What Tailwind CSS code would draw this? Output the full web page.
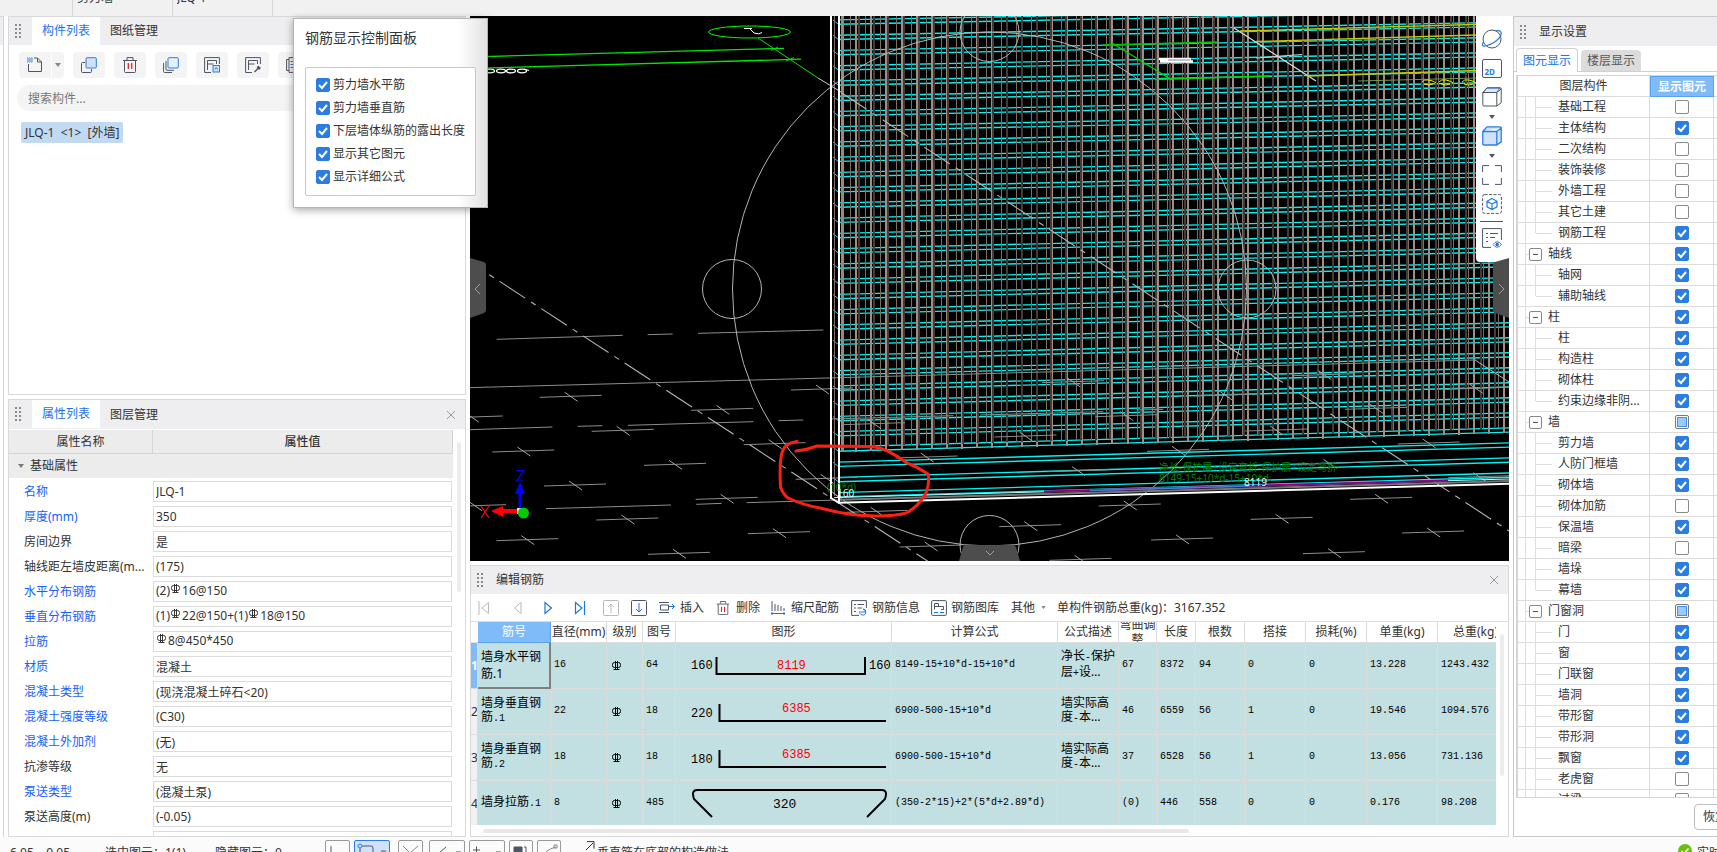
<!DOCTYPE html>
<html lang="zh-CN">
<head>
<meta charset="utf-8">
<title>钢筋三维</title>
<script src="https://cdn.jsdelivr.net/npm/@tailwindcss/browser@4"></script>
</head>
<body class="relative flex h-screen flex-col overflow-hidden bg-white font-['Noto_Sans','Noto_Sans_CJK_SC',sans-serif] text-[12px] leading-4 text-[#333]">

<svg class="hidden">
  <symbol id="grip" viewBox="0 0 6 14"><g fill="#8a8a8a"><path d="M0 0h2v2H0zM4 0h2v2H4zM0 4h2v2H0zM4 4h2v2H4zM0 8h2v2H0zM4 8h2v2H4zM0 12h2v2H0zM4 12h2v2H4z"/></g></symbol>
  <symbol id="close" viewBox="0 0 10 10"><path d="M1 1l8 8M9 1l-8 8" stroke="#9a9a9a" fill="none"/></symbol>
  <symbol id="caret" viewBox="0 0 6 4"><path d="M0 0h6L3 4z" fill="currentColor"/></symbol>
  <symbol id="tick" viewBox="0 0 14 14"><path d="M3 7l3 3 5-6" stroke="#fff" stroke-width="2" fill="none"/></symbol>
  <symbol id="steel" viewBox="0 0 10 10"><rect x=".5" y="1.500" width="8" height="5" rx="2" stroke="currentColor" fill="none"/><path d="M3.500 0v9M5.500 0v9M1.500 8.500h6" stroke="currentColor" fill="none"/></symbol>
  <symbol id="cube" viewBox="0 0 20 20"><path d="M.8 5.500h14V19H2Q.8 19 .8 17.800zM14.800 19l4.400-3.200V2L14.800 5.500M.8 5.500L5 .8h13q1.200 0 1.200 1.200"/></symbol>
</svg>

<header class="flex h-4 shrink-0 items-end bg-[#f1f1f1]">
  <label class="flex h-9 w-[73px] items-center justify-end border-r border-[#d5d5d5] pr-1.5 text-[#555]"><svg class="h-1 w-1.5"><use href="#caret"/></svg></label>
  <label class="flex h-9 w-[100px] items-center border-r border-[#d5d5d5] pr-1.5 pl-1 text-[#555]"><select aria-label="构件类型" class="flex-1 appearance-none text-[#333]"><option>剪力墙</option></select><svg class="h-1 w-1.5"><use href="#caret"/></svg></label>
  <label class="flex h-9 w-[100px] items-center border-r border-[#d5d5d5] pr-1.5 pl-1 text-[#555]"><select aria-label="构件" class="flex-1 appearance-none text-[#333]"><option>JLQ-1</option></select><svg class="h-1 w-1.5"><use href="#caret"/></svg></label>
</header>

<main class="flex min-h-0 flex-1">
  <aside class="mr-1 w-1 shrink-0 border-r border-[#d5d5d5]"><div class="h-[29px] border-t border-[#d9d9d9] bg-[#eeeef0]"></div></aside>

  <div class="flex w-[458px] shrink-0 flex-col gap-1">
    <section class="h-[379px] shrink-0 border border-[#d9d9d9]">
      <div class="flex h-7 items-stretch bg-[#eeeef0]">
        <svg class="mx-1.5 mt-[7px] h-3.5 w-1.5"><use href="#grip"/></svg>
        <button class="ml-[5px] w-[68px] bg-white text-[#1a73e8]">构件列表</button>
        <button class="w-[68px]">图纸管理</button>
      </div>
      <div class="flex h-[33px] items-center gap-[9px] overflow-hidden pt-[7px] pl-2.5 text-[#4d5566]">
        <div class="flex shrink-0 gap-px">
          <button aria-label="新建" class="grid h-[26px] w-8 place-items-center rounded-l-sm bg-[#f4f4f5]"><svg class="size-4" viewBox="0 0 16 16" fill="none" stroke="currentColor"><path d="M1.500 7v7.500h13V5l-4-4H7M10.500 1v4h4"/><path d="M0 1h5M0 3h5M0 5h5" stroke="#2b7de1" stroke-dasharray="1 1"/><path d="M1 2h5M1 4h5" stroke="#2b7de1" stroke-dasharray="1 1"/></svg></button>
          <button aria-label="新建选项" class="grid h-[26px] w-3 place-items-center rounded-r-sm bg-[#f4f4f5] text-[#888]"><svg class="h-1 w-1.5"><use href="#caret"/></svg></button>
        </div>
        <button aria-label="复制" class="grid h-[26px] w-8 shrink-0 place-items-center rounded-sm bg-[#f4f4f5]"><svg class="size-4" viewBox="0 0 16 16" fill="none" stroke="currentColor"><path d="M4 5.500H1.500q-1 0-1 1v8q0 1 1 1h8q1 0 1-1V12"/><rect x="5" y=".7" width="10.300" height="10.300" rx="1" fill="#cfe2fa" stroke="#2b7de1"/></svg></button>
        <button aria-label="删除" class="grid h-[26px] w-8 shrink-0 place-items-center rounded-sm bg-[#f4f4f5]"><svg class="size-4" viewBox="0 0 16 16" fill="none" stroke="currentColor"><path d="M1 3.500h14M5 3V.6h6V3M2.500 3.500v11q0 1 1 1h9q1 0 1-1v-11"/><path d="M6.300 6v6M9.700 6v6" stroke="#e0262b" stroke-width="1.300"/></svg></button>
        <button aria-label="层间复制" class="grid h-[26px] w-8 shrink-0 place-items-center rounded-sm bg-[#f4f4f5]"><svg class="size-4" viewBox="0 0 16 16" fill="none" stroke="currentColor"><path d="M.6 6v8.500q0 1 1 1H9M3 4v8q0 1.300 1 1.300h7"/><rect x="5" y=".7" width="10.300" height="10.300" rx="1" fill="#e6f0fd" stroke="#2b7de1"/></svg></button>
        <button aria-label="存档" class="grid h-[26px] w-8 shrink-0 place-items-center rounded-sm bg-[#f4f4f5]"><svg class="size-4" viewBox="0 0 16 16" fill="none" stroke="currentColor"><path d="M7 15.500H.6V.6h14.800V7M3.500 13V3.500h9V7M3.500 7h6"/><rect x="9" y="8.500" width="6.500" height="6.500" fill="#cfe2fa" stroke="#2b7de1"/><path d="M11 12.500l1.200-2 1.300 2" stroke="#2b7de1"/></svg></button>
        <button aria-label="提取" class="grid h-[26px] w-8 shrink-0 place-items-center rounded-sm bg-[#f4f4f5]"><svg class="size-4" viewBox="0 0 16 16" fill="none" stroke="currentColor"><path d="M7 15.500H.6V.6h14.800V7M3.500 13V3.500h9V7M3.500 7h6"/><path d="M9.500 15l4-4" stroke-width="1.500"/><path d="M12.500 9.500l2.500 2.500" stroke-width="2.500"/></svg></button>
        <button aria-label="更多" class="grid h-[26px] w-8 shrink-0 place-items-center rounded-sm bg-[#f4f4f5]"><svg class="size-4" viewBox="0 0 16 16" fill="none" stroke="currentColor"><path d="M3 2.500H.6v11H3M3 .6h12v14.800H3z"/><path d="M4.500 4.500h9M4.500 7.500h9M4.500 10.500h9" stroke="#2b7de1"/></svg></button>
      </div>
      <div class="mx-2 mt-[7px]"><input type="text" aria-label="搜索构件" placeholder="搜索构件..." class="h-[26px] w-full rounded-full bg-[#f4f4f5] px-[11px] placeholder:text-[#777]"></div>
      <button class="mt-[11px] ml-3 h-[21px] rounded-xs bg-[#c2d9f2] px-1 whitespace-pre">JLQ-1  &lt;1&gt;  [外墙]</button>
    </section>

    <section class="flex min-h-0 flex-1 flex-col border border-[#d9d9d9]">
      <div class="flex h-[29px] shrink-0 items-stretch bg-[#eeeef0]">
        <svg class="mx-1.5 mt-[7px] h-3.5 w-1.5"><use href="#grip"/></svg>
        <button class="mb-px ml-[5px] w-[68px] bg-white text-[#1a73e8]">属性列表</button>
        <button class="w-[68px]">图层管理</button>
        <button aria-label="关闭" class="mr-[9px] ml-auto"><svg class="size-2.5"><use href="#close"/></svg></button>
      </div>
      <div class="flex min-h-0 flex-1 overflow-hidden pt-px">
        <div class="flex-1">
          <div class="grid h-6 grid-cols-[144px_1fr] border-b border-[#d5d5d5] bg-[#ececed] text-center leading-6">
            <div class="border-r border-[#d5d5d5]">属性名称</div><div class="border-r border-[#d5d5d5] font-medium">属性值</div>
          </div>
          <div class="mb-px flex h-6 items-center bg-[#ececed] pl-[9px] text-[#777]"><svg class="h-1 w-1.5"><use href="#caret"/></svg><span class="ml-1.5 text-[#333]">基础属性</span></div>
          <div id="props"></div>
        </div>
        <div class="w-3 pt-3 pl-1"><div class="h-[150px] w-1 rounded-full bg-[#ececec]"></div></div>
      </div>
    </section>
  </div>

  <div class="mx-1 flex min-w-0 flex-1 flex-col gap-1">
    <section class="relative min-h-0 flex-1 overflow-hidden bg-black">
      <svg id="scene" class="block size-full" viewBox="470 16 1039 545" preserveAspectRatio="xMinYMin slice" fill="none"></svg>
      <div class="absolute top-0 right-0 flex w-[33px] flex-col items-center rounded-bl bg-white pt-[13px] pr-0.5 pb-3.5 text-[#4d5566]">
        <button aria-label="动态观察"><svg class="size-5" viewBox="0 0 20 20" fill="none" stroke="currentColor"><circle cx="10" cy="10" r="9"/><path d="M2 12.500C-1 16 0 18 5 16.500S17 11 18.500 7 19 .8 13.500 2" stroke="#2b7de1" stroke-width="1.300"/></svg></button>
        <button aria-label="二维" class="mt-2.5 flex h-[19px] w-5 items-end rounded-xs border border-[#4d5566] pl-0.5 text-[8px] leading-[11px] font-bold text-[#2b7de1]">2D</button>
        <button aria-label="线框" class="mt-[9px]"><svg class="size-5" fill="none" stroke="#4d5566"><path d="M1 5.500L5 1h13l-3.500 4.500z" fill="#dbe9fc" stroke="#2b7de1"/><use href="#cube"/></svg></button>
        <svg class="mt-2 h-1 w-1.5"><use href="#caret"/></svg>
        <button aria-label="实体" class="mt-[7px]"><svg class="size-5" fill="#cfe2fa" stroke="#2b7de1" stroke-width="1.300"><use href="#cube"/></svg></button>
        <svg class="mt-2 h-1 w-1.5"><use href="#caret"/></svg>
        <button aria-label="全屏" class="mt-[7px]"><svg class="size-5" viewBox="0 0 20 20" fill="none" stroke="currentColor"><path d="M.6 7V.6H7M13 .6h6.400V7M19.400 13v6.400H13M7 19.400H.6V13"/></svg></button>
        <button aria-label="局部三维" class="mt-[9px]"><svg class="size-5" viewBox="0 0 20 20" fill="none" stroke="currentColor"><rect x=".6" y=".6" width="18.800" height="18.800" rx="2" stroke-dasharray="3 1.500"/><path d="M10 4.500l5 2.800v5.500l-5 2.800-5-2.800V7.300zM5 7.300l5 2.800 5-2.800M10 10v5.600" stroke="#2b7de1" stroke-width="1.200"/></svg></button>
        <div class="mt-[7px] h-px w-[23px] bg-[#4d5566]"></div>
        <button aria-label="显示设置" class="mt-1.5"><svg class="size-5" viewBox="0 0 20 20" fill="none" stroke="currentColor"><path d="M19.400 12V.6H.6v18.800H9M4 5.500h2M8 5.500h8M4 9.500h2M8 9.500h5M4 13.500h2"/><path d="M11 16.500q4-5.500 8.500 0-4.500 5.500-8.500 0z" stroke="#2b7de1"/><circle cx="15.200" cy="16.500" r="1.300" fill="#2b7de1"/></svg></button>
      </div>
      <button aria-label="收起左侧" class="absolute top-[242px] left-0"><svg class="h-[62px] w-4" viewBox="0 0 16 62"><path d="M0 0l14 4q2 .5 2 3v45q0 2-2 3L0 60z" fill="#4d4d4d"/><path d="M10 26l-5 5 5 5" fill="none" stroke="#a0a0a0"/></svg></button>
      <button aria-label="收起右侧" class="absolute top-[242px] right-0"><svg class="h-[62px] w-4" viewBox="0 0 16 62"><path d="M16 0L2 4Q0 4.500 0 7v45q0 2 2 3l14 5z" fill="#4d4d4d"/><path d="M6 26l5 5-5 5" fill="none" stroke="#a0a0a0"/></svg></button>
      <button aria-label="收起下方" class="absolute bottom-0 left-[489px]"><svg class="block h-4 w-[62px]" viewBox="0 0 62 16"><path d="M0 16L4 2q.5-2 3-2h46q3 0 4 2l4 14z" fill="#4d4d4d"/><path d="M27 6l4 4 4-4" fill="none" stroke="#a0a0a0"/></svg></button>
    </section>

    <section class="h-[272px] shrink-0 border border-[#d9d9d9]">
      <div class="flex h-7 items-center bg-[#eeeef0]">
        <svg class="mx-1.5 h-3.5 w-1.5"><use href="#grip"/></svg>
        <h2 class="ml-[7px]">编辑钢筋</h2>
        <button aria-label="关闭" class="mr-[9px] ml-auto"><svg class="size-2.5"><use href="#close"/></svg></button>
      </div>
      <div class="flex h-[27px] items-center overflow-hidden whitespace-nowrap">
        <button aria-label="首行" class="ml-[7px] w-[34px]"><svg class="h-3.5 w-3" viewBox="0 0 12 14" fill="none" stroke="#b9b9b9"><path d="M1 0v14M10.500 1.500v11L4 7z"/></svg></button>
        <button aria-label="上一行" class="w-[31px]"><svg class="h-3.5 w-3" viewBox="0 0 12 14" fill="none" stroke="#b9b9b9"><path d="M9 1.500v11L2.500 7z"/></svg></button>
        <button aria-label="下一行" class="w-[31px]"><svg class="h-3.5 w-3" viewBox="0 0 12 14" fill="none" stroke="#1a73e8" stroke-width="1.200"><path d="M2 1.500v11L8.500 7z"/></svg></button>
        <button aria-label="末行" class="w-[29px]"><svg class="h-3.5 w-3" viewBox="0 0 12 14" fill="none" stroke="#1a73e8" stroke-width="1.200"><path d="M1.500 1.500v11L8 7zM10.500 0v14"/></svg></button>
        <button aria-label="上移" class="w-7"><svg class="size-4" viewBox="0 0 16 16" fill="none" stroke="#b9b9b9"><rect x=".5" y=".5" width="15" height="15" rx="1"/><path d="M8 13V4M5 7l3-3 3 3"/></svg></button>
        <button aria-label="下移" class="w-7"><svg class="size-4" viewBox="0 0 16 16" fill="none" stroke="#4d5566"><rect x=".5" y=".5" width="15" height="15" rx="1"/><path d="M8 3v9M5 9l3 3 3-3" stroke="#1a73e8"/></svg></button>
        <button class="flex w-[57px] items-center gap-[5px]"><svg class="size-4" viewBox="0 0 16 16" fill="none" stroke="#4d5566"><path d="M0 2.500h10M1.500 5h8v5h-8zM0 12.500h10"/><path d="M10 6.500h5M13 4l2.500 2.500L13 9" stroke="#1a73e8"/></svg>插入</button>
        <button class="flex w-[55px] items-center gap-1.5"><svg class="size-3.5" viewBox="0 0 14 16" fill="none" stroke="#4d5566"><path d="M0 3.500h14M4 3V.6h6V3M1.500 3.500v11q0 1 1 1h9q1 0 1-1v-11"/><path d="M5.300 6.500v6M8.700 6.500v6" stroke="#e0262b" stroke-width="1.300"/></svg>删除</button>
        <button class="flex w-20 items-center gap-1.5"><svg class="size-3.5" viewBox="0 0 14 14" fill="none" stroke="#4d5566"><path d="M1 0v10M4 3v7M7 4v6M10 5v5M13 7v3"/><path d="M0 12.500h14M1 11v3M13 11v3" stroke="#1a73e8"/></svg>缩尺配筋</button>
        <button class="flex w-20 items-center gap-[5px]"><svg class="size-4" viewBox="0 0 16 16" fill="none" stroke="#4d5566"><path d="M15.400 8V.6H.6v14.800H8M3 4.500h2M6.500 4.500H13M3 8h2M6.500 8H11M3 11.500h2"/><path d="M9 11a3 3 0 1 0 3-2M12 9l2 1.500M10 12h5" stroke="#1a73e8"/></svg>钢筋信息</button>
        <button class="flex w-[79px] items-center gap-1"><svg class="size-4" viewBox="0 0 16 16" fill="none" stroke="#4d5566"><rect x=".6" y=".6" width="14.800" height="14.800" rx="1"/><path d="M3.500 9.500V3.500h4V7M3.500 6.500h9v3H10"/><path d="M3 12.500h10" stroke="#1a73e8" stroke-dasharray="4 2"/></svg>钢筋图库</button>
        <button class="flex w-[47px] items-center gap-1.5 pl-px text-[#888]"><span class="text-[#333]">其他</span><svg class="h-[3px] w-[5px]" viewBox="0 0 6 4"><use href="#caret"/></svg></button>
        <span>单构件钢筋总重(kg)：3167.352</span>
      </div>
      <div class="flex border-t border-[#dcdcdc]">
        <div class="h-[203px] flex-1 overflow-hidden">
          <table class="w-[1038px] table-fixed border-separate border-spacing-0">
            <colgroup><col class="w-[7px]"><col class="w-[73px]"><col class="w-14"><col class="w-9"><col class="w-[33px]"><col class="w-[216px]"><col class="w-[166px]"><col class="w-[61px]"><col class="w-[38px]"><col class="w-[39px]"><col class="w-[49px]"><col class="w-[61px]"><col class="w-[61px]"><col class="w-[71px]"><col class="w-[76px]"></colgroup>
            <thead id="barHead"></thead>
            <tbody id="barBody" class="bg-[#c2dfe1] text-black"></tbody>
          </table>
        </div>
        <div class="w-3 pt-3 pl-1"><div class="h-[142px] w-1 rounded-full bg-[#ececec]"></div></div>
      </div>
      <div class="mt-1 ml-3 h-1 w-[706px] rounded-full bg-[#e8e8e8]"></div>
    </section>
  </div>

  <aside class="flex w-[204px] shrink-0 flex-col overflow-hidden border border-r-0 border-[#c9c9cd]">
    <div class="flex h-[29px] shrink-0 items-center bg-[#eeeef0]">
      <svg class="mx-1.5 h-3.5 w-1.5"><use href="#grip"/></svg>
      <h2 class="ml-[7px]">显示设置</h2>
    </div>
    <div class="flex h-[26px] shrink-0 items-end pt-[2px]">
      <span class="w-0.5 self-stretch border-b border-[#d0d0d0]"></span>
      <button class="h-6 w-[62px] rounded-t-sm border border-b-0 border-[#d0d0d0] text-[#1a73e8]">图元显示</button>
      <div class="flex-1 self-stretch border-b border-[#d0d0d0] pt-0.5 pl-[3px]"><button class="h-[21px] w-[60px] rounded-t-sm bg-[#dcdcdc] text-[#555]">楼层显示</button></div>
    </div>
    <div class="mt-[3px] ml-0.5 min-h-0 flex-1 overflow-hidden border-t border-b border-l-2 border-[#d5d5d5]">
      <table class="w-full table-fixed border-separate border-spacing-0">
        <colgroup><col class="w-[132px]"><col class="w-[64px]"><col></colgroup>
        <thead><tr class="h-[21px]"><th class="border-r border-b border-[#dcdcdc] font-normal">图层构件</th><th class="border border-[#5aa2ee] bg-[#7fbaf9] font-bold text-white">显示图元</th><th class="border-b border-[#dcdcdc]"></th></tr></thead>
        <tbody id="tree"></tbody>
      </table>
    </div>
    <div class="flex h-[38px] shrink-0 items-center pl-[180px]"><button class="h-[26px] shrink-0 rounded-sm border border-[#bdbdbd] px-2 whitespace-nowrap">恢复默认</button></div>
  </aside>
</main>

<footer class="flex h-[15px] shrink-0 items-start overflow-hidden bg-[#fbfbfb] whitespace-nowrap">
  <span class="w-[95px] pl-2.5 leading-8 whitespace-pre">6.05    0.05</span>
  <span class="w-[110px] pl-2.5 leading-8">选中图元：1(1)</span>
  <span class="w-[120px] pl-2.5 leading-8">隐藏图元：0</span>
  <div class="flex gap-1 pt-[3px] text-[#4d5566]">
    <button aria-label="正交" class="h-6 w-[25px] rounded-xs border border-[#999]"><svg class="size-5" fill="none" stroke="currentColor"><path d="M5 4v12h12"/></svg></button>
    <button aria-label="捕捉" class="flex h-6 w-9 items-center rounded-xs border border-[#2b7de1] bg-[#cfe2fa]"><svg class="h-6 w-8" fill="none" stroke="currentColor"><path d="M7 6h9q2 0 2 2v12M5 8v12"/><circle cx="5" cy="6" r="2" stroke="#2b7de1"/><path d="M26 11h5"/></svg></button>
    <button aria-label="交点" class="ml-1 h-6 w-[25px] rounded-xs border border-[#999]"><svg class="size-5" fill="none" stroke="#888"><path d="M4 4l7 7 8-7M11 11v8"/></svg></button>
    <button aria-label="垂点" class="ml-0.5 h-6 w-9 rounded-xs border border-[#999]"><svg class="h-6 w-8" fill="none" stroke="currentColor"><path d="M9 12l7-6M26 11h5"/></svg></button>
    <button aria-label="中点" class="h-6 w-9 rounded-xs border border-[#999]"><svg class="h-6 w-8" fill="none" stroke="currentColor"><path d="M3 9h7M6.500 5.500v8M26 11h5"/></svg></button>
    <button aria-label="顶点" class="h-6 w-6 rounded-xs border border-[#999]"><svg class="size-5" fill="none" stroke="currentColor"><path d="M4 5h8v10H4z" fill="currentColor"/><path d="M14 5h2v10"/></svg></button>
    <button aria-label="弧线" class="h-6 w-6 rounded-xs border border-[#999]"><svg class="size-5" fill="none" stroke="#888"><path d="M5 16Q6 8 18 5"/><path d="M16 3h3v3h-3z"/></svg></button>
  </div>
  <svg class="mt-1 ml-6 size-2.5" viewBox="0 0 10 10" fill="none" stroke="#333"><path d="M1 9l7-7M2 .6h7v7"/></svg>
  <span class="ml-0.5 leading-8">垂直筋在底部的构造做法</span>
  <svg class="mt-1.5 ml-auto size-4" viewBox="0 0 16 16"><circle cx="8" cy="8" r="7" fill="#6cbf12"/><path d="M4.500 8l2.500 2.500 4.500-5" stroke="#fff" stroke-width="1.500" fill="none"/></svg>
  <span class="ml-1 w-5 overflow-hidden leading-8">实时</span>
</footer>

<div role="dialog" aria-label="钢筋显示控制面板" class="absolute top-[18px] left-[293px] h-[190px] w-[195px] border border-[#b5b5b5] bg-linear-to-r from-white from-85% to-[#e2e2e2] px-[11px] pt-2.5 shadow-[0_2px_8px_rgba(0,0,0,0.35)]">
  <h2 class="text-[14px] leading-[18px]">钢筋显示控制面板</h2>
  <div id="options" class="mt-5 h-[129px] rounded-xs border border-[#c8c8c8] bg-white pt-[5px] pl-2.5"></div>
</div>

<script>
const put = (id, html) => { document.getElementById(id).innerHTML = html; };

/* state: 1 ticked, 0 empty, 2 partly ticked */
const box = (state, name) => {
  if (state === 2) return `<span class="inline-grid size-3.5 rounded-xs border border-[#777] p-px"><input type="checkbox" aria-label="${name}" class="size-full appearance-none border border-[#3b93f5] bg-[#9ccafb]"></span>`;
  return `<span class="inline-grid size-3.5"><input type="checkbox" aria-label="${name}" ${state ? 'checked' : ''} class="col-start-1 row-start-1 size-3.5 appearance-none rounded-xs border border-[#8a8a8a] bg-white checked:border-[#2b7de1] checked:bg-[#2b7de1]">${state ? '<svg class="pointer-events-none col-start-1 row-start-1 size-3.5"><use href="#tick"/></svg>' : ''}</span>`;
};

put('options', ['剪力墙水平筋', '剪力墙垂直筋', '下层墙体纵筋的露出长度', '显示其它图元', '显示详细公式']
  .map(t => `<label class="flex h-[23px] items-center gap-[3px] whitespace-nowrap">${box(1, t)}<span>${t}</span></label>`).join(''));

const steel = '<svg class="mx-px inline-block size-2.5 align-[1px]"><use href="#steel"/></svg>';
put('props', [
  ['名称', 'JLQ-1', 1], ['厚度(mm)', '350', 1], ['房间边界', '是', 0], ['轴线距左墙皮距离(m...', '(175)', 0],
  ['水平分布钢筋', '(2)#16@150', 1], ['垂直分布钢筋', '(1)#22@150+(1)#18@150', 1], ['拉筋', '#8@450*450', 1],
  ['材质', '混凝土', 1], ['混凝土类型', '(现浇混凝土碎石<20)', 1], ['混凝土强度等级', '(C30)', 1], ['混凝土外加剂', '(无)', 1],
  ['抗渗等级', '无', 0], ['泵送类型', '(混凝土泵)', 1], ['泵送高度(m)', '(-0.05)', 0], ['', '', 0]
].map(([k, v, blue], i) => `<div class="grid h-[25px] grid-cols-[144px_1fr] items-center"><label for="p${i}" class="pl-[15px] whitespace-nowrap ${blue ? 'text-[#1560ff]' : 'text-[#333]'}">${k}</label>${
  v.includes('#')
    ? `<div id="p${i}" role="textbox" aria-label="${k}" contenteditable="true" class="mr-px h-[21px] border border-[#dcdcdc] px-0.5 leading-[18px]">${v.replaceAll('#', steel)}</div>`
    : `<input id="p${i}" type="text" value="${v.replace('<', '&lt;')}" class="mr-px h-[21px] border border-[#dcdcdc] px-0.5">`}</div>`).join(''));

const heads = ['筋号', '直径(mm)', '级别', '图号', '图形', '计算公式', '公式描述', '弯曲调整', '长度', '根数', '搭接', '损耗(%)', '单重(kg)', '总重(kg)'];
put('barHead', '<tr><th class="border-b border-[#dcdcdc]"></th>' + heads.map((h, i) =>
  `<th class="border-r border-b p-0 font-normal ${i === 0 ? 'border-[#5aa2ee] bg-[#7fbaf9] text-white' : 'border-[#dcdcdc]'}"><div class="flex h-5 items-center justify-center overflow-hidden ${i === 7 ? 'leading-[15px]' : 'whitespace-nowrap'}">${h}</div></th>`).join('') + '</tr>');

const shape = {
  a: `<path d="M40.500 14v17H189V14"/><g class="font-['Liberation_Mono',monospace] text-[12px]" stroke="none" fill="#000"><text x="15" y="26">160</text><text x="193" y="26">160</text><text x="101" y="26" fill="#f00">8119</text></g>`,
  b: n => `<path d="M43.500 15v17H210"/><g class="font-['Liberation_Mono',monospace] text-[12px]" stroke="none" fill="#000"><text x="15" y="28">${n}</text><text x="106" y="23" fill="#f00">6385</text></g>`,
  c: `<path d="M36 36L18 18q-3-9 3-9H206q6 0 3 9L191 36"/><g class="font-['Liberation_Mono',monospace] text-[13px]" stroke="none" fill="#000"><text x="97" y="27">320</text></g>`
};
const L = t => `<span class="font-['Liberation_Mono',monospace] text-[10px]">${t}</span>`;
const bars = [
  ['墙身水平钢<br>筋.1', '16', '64', shape.a, '8149-15+10*d-15+10*d', `净长${L('-')}保护<br>层${L('+')}设…`, '67', '8372', '94', '0', '0', '13.228', '1243.432'],
  [`墙身垂直钢<br>筋${L('.1')}`, '22', '18', shape.b(220), '6900-500-15+10*d', `墙实际高<br>度${L('-')}本…`, '46', '6559', '56', '1', '0', '19.546', '1094.576'],
  [`墙身垂直钢<br>筋${L('.2')}`, '18', '18', shape.b(180), '6900-500-15+10*d', `墙实际高<br>度${L('-')}本…`, '37', '6528', '56', '1', '0', '13.056', '731.136'],
  [`墙身拉筋${L('.1')}`, '8', '485', shape.c, '(350-2*15)+2*(5*d+2.89*d)', '', '(0)', '446', '558', '0', '0', '0.176', '98.208']
];
put('barBody', bars.map((b, i) => {
  const n = t => `<td class="border-r border-b border-[#dcdcdc] p-0 pb-0.5 pl-[3px] font-['Liberation_Mono',monospace] text-[10px] whitespace-nowrap">${t}</td>`;
  return `<tr class="h-[46px]"><th class="overflow-hidden border-r border-b border-[#dcdcdc] p-0 ${i === 0 ? 'bg-[#7fbaf9] font-bold text-white' : 'bg-[#f1f1f1] font-normal text-[#333]'}">${i + 1}</th>
  <td class="p-0 pl-[3px] whitespace-nowrap ${i === 0 ? 'border-r-2 border-b-2 border-[#808080] leading-[17px]' : 'border-r border-b border-[#dcdcdc] pb-0.5 leading-[14px]'}">${b[0]}</td>${n(b[1])}
  <td class="border-r border-b border-[#dcdcdc] p-0 pl-[5px]"><svg class="size-2.5"><use href="#steel"/></svg></td>${n(b[2])}
  <td class="border-r border-b border-[#dcdcdc] p-0"><svg class="block h-[45px] w-full overflow-visible" fill="none" stroke="#000" stroke-width="2">${b[3]}</svg></td>${n(b[4])}
  <td class="border-r border-b border-[#dcdcdc] p-0 pb-0.5 pl-[3px] leading-[14px] whitespace-nowrap">${b[5]}</td>${b.slice(6).map(n).join('')}</tr>`;
}).join(''));

/* name, state, level: p group row, c child, l last child */
put('tree', `基础工程 0 c,主体结构 1 c,二次结构 0 c,装饰装修 0 c,外墙工程 0 c,其它土建 0 c,钢筋工程 1 l,轴线 1 p,轴网 1 c,辅助轴线 1 l,柱 1 p,柱 1 c,构造柱 1 c,砌体柱 1 c,约束边缘非阴... 1 l,墙 2 p,剪力墙 1 c,人防门框墙 1 c,砌体墙 1 c,砌体加筋 0 c,保温墙 1 c,暗梁 0 c,墙垛 1 c,幕墙 1 l,门窗洞 2 p,门 1 c,窗 1 c,门联窗 1 c,墙洞 1 c,带形窗 1 c,带形洞 1 c,飘窗 1 c,老虎窗 0 c,过梁 0 c`
  .split(',').map(r => {
    const [name, s, lv] = r.split(' ');
    const lead = lv === 'p'
      ? '<span class="h-px w-[3px] bg-[#dedede]"></span><button aria-label="折叠" class="mr-1.5 grid size-[13px] place-items-center rounded-xs border border-[#888]"><span class="h-px w-[5px] bg-[#555]"></span></button>'
      : `<span class="ml-[9px] w-px self-start bg-[#dedede] ${lv === 'l' ? 'h-2.5' : 'h-5'}"></span><span class="mr-1.5 h-px w-4 bg-[#dedede]"></span>`;
    return `<tr class="h-[21px]"><td class="border-r border-b border-[#dcdcdc] p-0"><div class="flex h-5 items-center whitespace-nowrap"><span class="w-2 self-stretch border-r border-[#dedede]"></span>${lead}<span>${name}</span></div></td><td class="border-r border-b border-[#dcdcdc] p-0"><div class="flex h-5 items-center justify-center">${box(+s, name)}</div></td><td class="border-b border-[#dcdcdc] p-0"></td></tr>`;
  }).join(''));

/* 3D view */
const out = [];
const line = (x1, y1, x2, y2, c, w = 1, extra = '') => out.push(`<path d="M${x1} ${y1}L${x2} ${y2}" stroke="${c}" stroke-width="${w}" ${extra}/>`);
const crisp = 'shape-rendering="crispEdges"';
const ends = x => 452 - (x - 841) * 0.028;

for (let k = 0; k <= 31; k++) {
  for (const d of [-4.3, 0]) {
    const y = 24.2 + 15.25 * k + d;
    const s = 0.019 + (y - 16) / 484 * 0.0105;
    line(838, y.toFixed(1), 1509, (y - 671 * s).toFixed(1), '#00f4f4', 1.4);
  }
  const y = 20 + 15.25 * k;
  line(833, y, 838, y + 4, '#00dcdc');
}
line(842, 16, 842, 452, '#9a8880', 3, crisp);
for (let k = 0; k < 45; k++) {
  const x = Math.round(856.3 + 15.07 * k), d = k / 44;
  if (x < 1508) line(x, 16, x, ends(x), '#a08e86', 2, crisp);
  line(x - 5.5, 16, x - 5.5, ends(x) - 5, '#7d6e68', 1, crisp);
  const t = x + 3 - Math.round(12 * d);
  line(t, 16, t, ends(x) - 5, '#453c39', 2, crisp);
}
line(834.5, 16, 834.5, 496, '#7d6e68', 1, crisp);

/* floor grid crosses */
const cross = (x, y) => { line(x - 31, y + 1, x + 31, y - 1, '#8c8c8c'); line(x - 6, y - 4, x + 7, y + 5, '#a8a8a8'); };
[[302,349],[757,388],[458,451],[160,513],[615,553],[315,615],[770,655],[472,717],[172,779],[627,820],[927,758],[1056,327],[914,491],[1070,595],[1212,431],[1370,531],[1220,694],[1382,798],[5,411],[15,677]].forEach(([x, y]) => cross(470 + x / 3, 280 + y / 3));
[[270,305],[425,407],[712,345],[132,468],[1000,284],[860,450],[1150,385],[1440,325],[575,511],[1303,489],[285,572],[1015,550],[435,675],[1165,655],[146,737],[876,715],[587,777],[1316,756],[1028,818],[292,838],[1450,590]].forEach(([x, y]) => cross(980 + x / 2.904, 280 + y / 3));
[[-5,323,1110,293],[80,178,458,166],[533,164,608,162],[684,160,1060,150],[0,449,247,441],[323,439,397,437],[474,436,850,425],[926,422,1000,420],[1080,417,1450,407],[1530,405,1900,395],[2000,390,2080,388],[228,686,603,675],[679,673,755,670],[830,668,1208,657],[1110,293,3017,240]].forEach(a => line(470 + a[0] / 3, 280 + a[1] / 3, 470 + a[2] / 3, 280 + a[3] / 3, '#8c8c8c'));
const dd = 'stroke-dasharray="30.600 7 5.500 6.700"';
line(488, 273.8, 929, 562, '#b4b4b4', 1.1, dd + ' stroke-dashoffset="36"');
line(841, 92.5, 1509, 531, '#b4b4b4', 1.1, dd);
line(1475, 360, 1509, 382, '#b4b4b4');

/* rotation handles */
const ring = (x, y, r) => out.push(`<circle cx="${x}" cy="${y}" r="${r}" stroke="#b4b4b4"/>`);
ring(989.5, 289, 257); ring(732, 289, 29.5); ring(989.5, 32, 29.5); ring(1247, 289, 29); ring(989.5, 545, 29.5);

/* axis annotations */
out.push('<ellipse cx="749.500" cy="32" rx="41" ry="6" stroke="#0f0"/><path d="M744 28.500h8M750 29l4 4q5 2 8-.5" stroke="#fff"/>');
line(758, 38, 818, 78, '#00e600'); line(818, 78, 841, 92, '#ccc');
line(470, 57, 784, 48.3, '#00e600', 1.3); line(470, 68.4, 801, 59.2, '#00e600', 1.3);
line(771, 50.5, 778, 47, '#00d800'); line(786, 61, 794, 57.5, '#00d800');
[490, 501, 511, 522].forEach(x => out.push(`<ellipse cx="${x}" cy="71" rx="4.500" ry="1.800" stroke="#fff" stroke-width="1.300"/>`));
line(524, 69, 529, 70.5, '#fff', 1.3);
line(1103, 45, 1218, 42, '#00c800', 1.5); line(1155, 79.5, 1270, 76, '#00d800', 1.3); line(1112, 43, 1172, 80, '#00d800', 1.3);
out.push('<path d="M1159 59h32M1160 61.500h33" stroke="#fff" stroke-width="2.500"/><path d="M1168 60h22" stroke="#888"/>');
line(1234, 28, 1316, 81, '#ddd', 1.2); line(1256, 58, 1302, 54.5, '#ccc', 1.2);
line(1240, 31, 1509, 23.5, '#c8c800', 1.3); line(1256, 41.5, 1509, 34, '#c8c800', 1.3); line(1308, 76, 1509, 69.5, '#c8c800', 1.3);
line(1358, 81, 1476, 78, '#6f9a55');
[1428, 1445, 1468].forEach(x => out.push(`<path d="M${x - 6} 82q2-3 7-2t7 3M${x - 4} 84q5 2 9 0" stroke="#f0f000"/>`));

/* wall foot */
line(838, 499.8, 1509, 481, '#777', 2);
line(834, 497.6, 1509, 479, '#bff');
line(1044, 491.5, 1448, 480.5, '#8a008a', 2);
line(1090, 490.5, 1250, 486, '#4a7ad0', 1.4);
line(838, 502.7, 1509, 483.8, '#fff', 2);
line(831, 498, 839, 503, '#fff', 2);
line(831, 16, 831, 499, '#fff', 2, crisp); line(839, 16, 839, 503, '#fff', 2, crisp);

out.push(`<g class="font-['Noto_Sans','Noto_Sans_CJK_SC',sans-serif] text-[10px]" fill="#008000"><text x="1159" y="471">净长-保护层+设定弯折-保护层+设定弯折</text><text x="1159" y="482">8149-15+10*d-15+10*d</text><text x="827" y="491">(10*d)</text><g fill="#eee"><text x="1244" y="486">8119</text><text x="837" y="497">160</text></g></g>`);

/* hand-drawn mark */
out.push('<path d="M797 441.500Q786 443 783 450Q779 458 780.500 487Q783 494 788 498Q803 505 820 508Q850 516 875 516Q906 516 911 510Q919 505 926 493Q930 482 928 474Q918 467 907 463Q888 449 875 447Q850 446 817 446Q807 450 796 451" stroke="#ff1e14" stroke-width="3" stroke-linecap="round"/>');

/* axis tripod */
out.push(`<rect x="517" y="508" width="6" height="6" fill="#ddd"/><path d="M520 508V492" stroke="#00f" stroke-width="3"/><path d="M515 494l5-12 5 12z" fill="#00f"/><path d="M517 511H500" stroke="#f00" stroke-width="4"/><path d="M503 506l-12 5 12 6z" fill="#f00"/><circle cx="523.500" cy="513" r="5.500" fill="#0c0"/><path d="M516.500 470.500h7l-7 10.500h7" stroke="#00f" stroke-width="1.200"/><path d="M481 506l8 12M489 506l-8 12" stroke="#f00" stroke-width="1.200"/>`);
document.getElementById('scene').innerHTML = out.join('');
</script>
</body>
</html>
